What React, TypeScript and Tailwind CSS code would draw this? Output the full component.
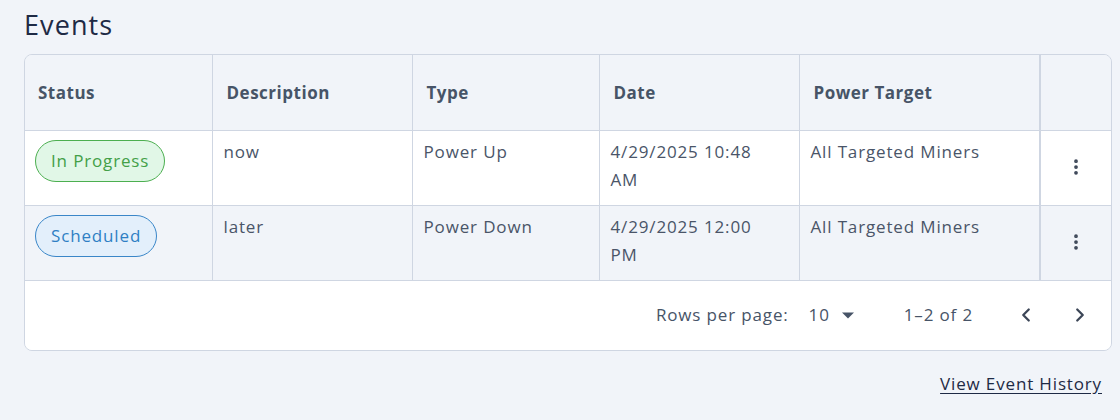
import { ChevronLeft, ChevronRight, EllipsisVertical } from "lucide-react";

interface EventRow {
  status: "In Progress" | "Scheduled";
  description: string;
  type: string;
  date: string;
  target: string;
}

const events: EventRow[] = [
  {
    status: "In Progress",
    description: "now",
    type: "Power Up",
    date: "4/29/2025 10:48 AM",
    target: "All Targeted Miners",
  },
  {
    status: "Scheduled",
    description: "later",
    type: "Power Down",
    date: "4/29/2025 12:00 PM",
    target: "All Targeted Miners",
  },
];

const StatusPill = ({ status }: { status: EventRow["status"] }) =>
  status === "In Progress" ? (
    <span className="inline-flex h-[42px] items-center rounded-full border border-[#4caf50] bg-[#e1f7e7] px-[15px] text-[#43a047]">
      In Progress
    </span>
  ) : (
    <span className="inline-flex h-[42px] items-center rounded-full border border-[#3a86c8] bg-[#e3effb] px-[15px] text-[#2f7fc4]">
      Scheduled
    </span>
  );

const App = () => {
  return (
    <div
      className="min-h-[420px] w-[1120px] bg-[#f1f4f9] pl-6 pr-2 pt-[5px] text-[17px] text-[#4a5568] tracking-[0.05em]"
      style={{ fontFamily: '"Open Sans", sans-serif' }}
    >
      <h1 className="mb-[10px] text-[27px] leading-[39px] tracking-[0.04em] text-[#1e2a45]">Events</h1>

      <div className="overflow-hidden rounded-lg border border-[#cfd6e2]">
        <table className="w-full table-fixed border-collapse">
          <colgroup>
            <col className="w-[187px]" />
            <col className="w-[200px]" />
            <col className="w-[187px]" />
            <col className="w-[200px]" />
            <col className="w-[241px]" />
            <col />
          </colgroup>
          <thead>
            <tr className="h-[75px] bg-[#f1f4f9] text-left font-bold text-[#475467]">
              <th className="border-r border-b border-[#cfd6e2] px-[13px] tracking-[0.03em]">Status</th>
              <th className="border-r border-b border-[#cfd6e2] px-[14px] tracking-[0.03em]">Description</th>
              <th className="border-r border-b border-[#cfd6e2] px-[14px] tracking-[0.03em]">Type</th>
              <th className="border-r border-b border-[#cfd6e2] px-[14px] tracking-[0.03em]">Date</th>
              <th className="border-r-2 border-b border-[#cfd6e2] px-[14px] tracking-[0.03em]">Power Target</th>
              <th className="border-b border-[#cfd6e2]"></th>
            </tr>
          </thead>
          <tbody>
            {events.map((e, i) => (
              <tr key={e.description} className={i % 2 ? "bg-[#f1f4f9]" : "bg-white"}>
                <td className="h-[75px] border-r border-b border-[#cfd6e2] px-[10px] align-top pt-[9px]">
                  <StatusPill status={e.status} />
                </td>
                <td className="border-r border-b border-[#cfd6e2] px-[11px] pt-[7px] align-top leading-7">
                  {e.description}
                </td>
                <td className="border-r border-b border-[#cfd6e2] px-[11px] pt-[7px] align-top leading-7">
                  {e.type}
                </td>
                <td className="border-r border-b border-[#cfd6e2] pl-[11px] pr-[36px] pt-[7px] align-top leading-7">
                  {e.date}
                </td>
                <td className="border-r-2 border-b border-[#cfd6e2] px-[11px] pt-[7px] align-top leading-7">
                  {e.target}
                </td>
                <td className="border-b border-[#cfd6e2] text-center">
                  <button className="inline-flex h-8 w-8 items-center justify-center text-[#3c4657]">
                    <EllipsisVertical size={20} strokeWidth={2.5} />
                  </button>
                </td>
              </tr>
            ))}
          </tbody>
        </table>
        <div className="flex h-[69px] items-center justify-end bg-white pr-[20px] text-[#475467]">
          <span>Rows per page:</span>
          <span className="ml-[20px] flex items-center">
            10
            <svg width="12" height="8" viewBox="0 0 12 8" className="ml-[12px]">
              <path d="M0 1.5h12L6 7.5z" fill="#475467" />
            </svg>
          </span>
          <span className="ml-[50px]">1–2 of 2</span>
          <ChevronLeft size={22} strokeWidth={2.5} className="ml-[42px] text-[#3c4657]" />
          <ChevronRight size={22} strokeWidth={2.5} className="ml-[32px] text-[#3c4657]" />
        </div>
      </div>

      <div className="mt-[20px] flex justify-end pr-[10px]">
        <a href="#" className="text-[#1e2a45] underline underline-offset-[3px]">
          View Event History
        </a>
      </div>
    </div>
  );
};

export default App;
